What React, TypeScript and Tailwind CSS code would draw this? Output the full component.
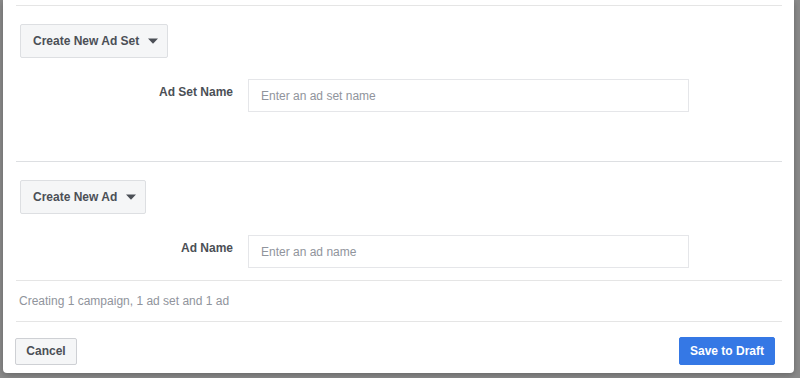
import { useState } from 'react'

function Caret() {
  return (
    <svg width="10" height="6" viewBox="0 0 10 6" className="ml-[9px] fill-[#4b4f56]">
      <path d="M0 0.5h10L5 5.8z" />
    </svg>
  )
}

type SectionProps = {
  title: string
  label: string
  placeholder: string
  buttonWidth: string
  bottomGap: string
}

function Section({ title, label, placeholder, buttonWidth, bottomGap }: SectionProps) {
  const [value, setValue] = useState('')

  return (
    <div className={`pt-[18px] ${bottomGap}`}>
      <button
        className={`ml-[4px] flex h-[34px] ${buttonWidth} items-center rounded-[2px] border border-[#dddfe2] bg-[#f5f6f7] pl-[12px] text-[12px] font-bold text-[#4b4f56]`}
      >
        {title}
        <Caret />
      </button>
      <div className="mt-[21px] flex items-start">
        <label className="w-[217px] pt-[5px] text-right text-[12px] leading-[16px] font-bold text-[#4b4f56]">
          {label}
        </label>
        <input
          value={value}
          onChange={(e) => setValue(e.target.value)}
          placeholder={placeholder}
          className="ml-[15px] h-[33px] w-[441px] border border-[#e5e6e9] px-[12px] text-[12px] text-[#1d2129] outline-none placeholder:text-[#90949c]"
        />
      </div>
    </div>
  )
}

export default function App() {
  return (
    <div className="flex h-[378px] w-[800px] overflow-hidden bg-[#8a8a8a] pl-[3px] font-['Liberation_Sans',Arial,sans-serif]">
      <div className="h-[373px] w-[791px] rounded-b-[4px] bg-white px-[13px] pr-[12px] shadow-[0_2px_6px_rgba(0,0,0,0.25)]">
        <div className="mt-[5px] border-t border-[#e5e5e5]" />
        <Section
          title="Create New Ad Set"
          label="Ad Set Name"
          placeholder="Enter an ad set name"
          buttonWidth="w-[148px]"
          bottomGap="pb-[49px]"
        />
        <div className="border-t border-[#dddfe2]" />
        <Section
          title="Create New Ad"
          label="Ad Name"
          placeholder="Enter an ad name"
          buttonWidth="w-[126px]"
          bottomGap="pb-[12px]"
        />
        <div className="border-t border-[#e5e5e5]" />
        <p className="flex h-[40px] items-center pl-[3px] text-[12px] text-[#90949c]">
          Creating 1 campaign, 1 ad set and 1 ad
        </p>
        <div className="border-t border-[#e5e5e5]" />
        <div className="mt-[15px] flex items-center justify-between pr-[7px]">
          <button className="-ml-[1px] h-[27px] w-[62px] rounded-[2px] border border-[#ced0d4] bg-[#f5f6f7] text-[12px] font-bold text-[#4b4f56]">
            Cancel
          </button>
          <button className="h-[28px] w-[96px] rounded-[2px] border border-[#3578e5] bg-[#3578e5] text-[12px] font-bold text-white">
            Save to Draft
          </button>
        </div>
      </div>
    </div>
  )
}
